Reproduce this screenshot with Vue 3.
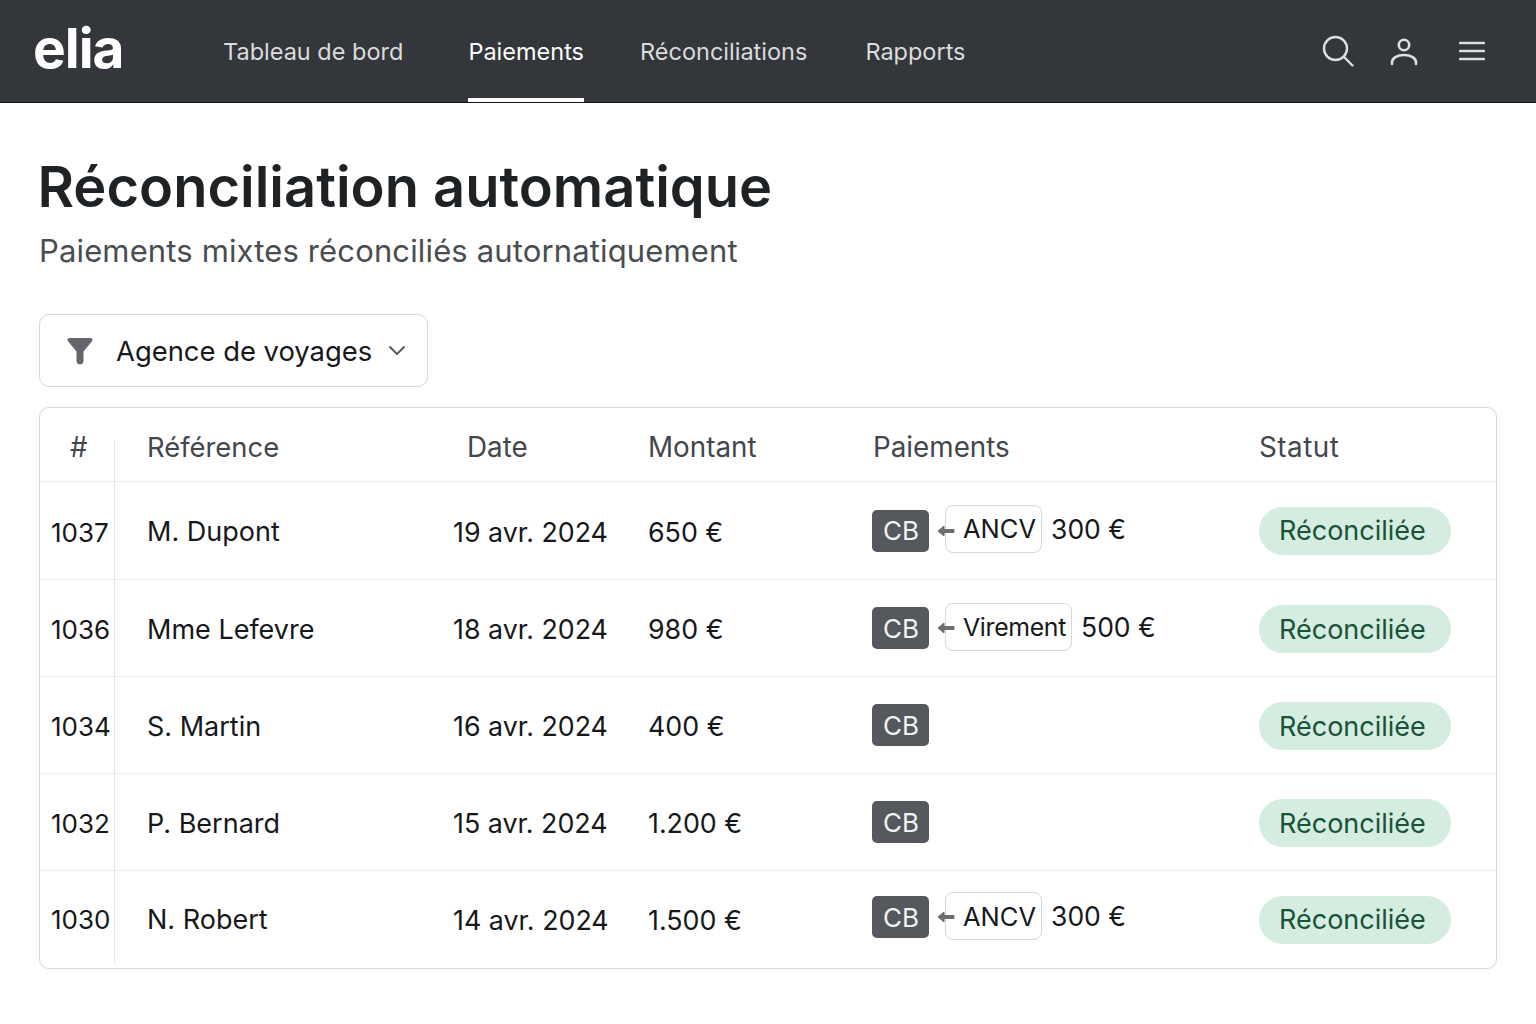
<script setup>
const rows = [
  { id: '1037', name: 'M. Dupont', date: '19 avr. 2024', amount: '650 €', other: 'ANCV', otherAmount: '300 €' },
  { id: '1036', name: 'Mme Lefevre', date: '18 avr. 2024', amount: '980 €', other: 'Virement', otherAmount: '500 €' },
  { id: '1034', name: 'S. Martin', date: '16 avr. 2024', amount: '400 €' },
  { id: '1032', name: 'P. Bernard', date: '15 avr. 2024', amount: '1.200 €' },
  { id: '1030', name: 'N. Robert', date: '14 avr. 2024', amount: '1.500 €', other: 'ANCV', otherAmount: '300 €' }
]
</script>

<template>
  <div class="page">
    <header class="topbar">
      <div class="logo">elia</div>
      <nav class="nav">
        <a class="nav-item nav-board">Tableau de bord</a>
        <a class="nav-item nav-pay active">Paiements</a>
        <a class="nav-item nav-rec">Réconciliations</a>
        <a class="nav-item">Rapports</a>
      </nav>
      <div class="top-icons">
        <svg width="32" height="32" viewBox="0 0 32 32" fill="none" stroke="#dcdedf" stroke-width="2.4" stroke-linecap="round">
          <circle cx="13.5" cy="13.5" r="11.5" />
          <path d="M22 22l8.500 8.500" />
        </svg>
        <svg width="30" height="30" viewBox="0 0 30 30" fill="none" stroke="#dcdedf" stroke-width="2.6" stroke-linecap="round">
          <circle cx="15" cy="9" r="5.200" />
          <path d="M3 28v-1.500C3 22 8 19 15 19s12 3 12 7.500V28" />
        </svg>
        <svg class="menu" width="26" height="20" viewBox="0 0 26 20" fill="none" stroke="#dcdedf" stroke-width="2.4" stroke-linecap="round">
          <path d="M1 2h24M1 10h24M1 18h24" />
        </svg>
      </div>
    </header>

    <main class="content">
      <h1>Réconciliation automatique</h1>
      <p class="subtitle">Paiements mixtes réconciliés autornatiquement</p>

      <button class="filter">
        <svg class="funnel" width="28" height="30" viewBox="0 0 28 30">
          <path d="M3.500 2h21c1.800 0 2.600 1.800 1.500 3.200L17.500 15.500V25c0 1.800-1.500 3.500-3.500 3.500s-3.500-1.700-3.500-3.500V15.500L2 5.200C.9 3.800 1.700 2 3.500 2z" fill="#63666a" />
        </svg>
        <span>Agence de voyages</span>
        <svg class="chev" width="18" height="11" viewBox="0 0 18 11" fill="none" stroke="#55585c" stroke-width="1.800" stroke-linecap="round" stroke-linejoin="round">
          <path d="M2 2l7 7 7-7" />
        </svg>
      </button>

      <section class="table">
        <div class="row head">
          <div class="c-id">#</div>
          <div class="c-ref">Référence</div>
          <div class="c-date">Date</div>
          <div>Montant</div>
          <div>Paiements</div>
          <div class="c-status">Statut</div>
        </div>
        <div v-for="r in rows" :key="r.id" class="row">
          <div class="c-id">{{ r.id }}</div>
          <div class="c-ref cell">{{ r.name }}</div>
          <div class="cell">{{ r.date }}</div>
          <div class="cell">{{ r.amount }}</div>
          <div class="pay">
            <span class="cb">CB</span>
            <template v-if="r.other">
              <svg class="arrow" width="18" height="12" viewBox="0 0 18 12">
                <path d="M1 6l6-5v3.500h10v3H7V11z" fill="#6b6e72" stroke="#6b6e72" stroke-linejoin="round" />
              </svg>
              <span class="other" :class="{ tight: r.other === 'Virement' }">{{ r.other }}</span>
              <span class="other-amount">{{ r.otherAmount }}</span>
            </template>
          </div>
          <div class="status-cell"><span class="status">Réconciliée</span></div>
        </div>
      </section>
    </main>
  </div>
</template>

<style>
html,
body {
  margin: 0;
  background: #fff;
}
</style>

<style scoped>
.page {
  font-family: Inter, "Liberation Sans", sans-serif;
  color: #1d2024;
  width: 1536px;
  height: 1024px;
  overflow: hidden;
}

.topbar {
  height: 102px;
  background: #33363a;
  border-bottom: 1px solid #111;
  display: flex;
  align-items: stretch;
  padding: 0 51px 0 33px;
}

.logo {
  width: 190px;
  font-size: 55px;
  font-weight: 700;
  letter-spacing: -1px;
  color: #fff;
  line-height: 96px;
}

.nav {
  display: flex;
  flex: 1;
}

.nav-item {
  font-size: 23.5px;
  color: #dadcdd;
  line-height: 104px;
  box-sizing: border-box;
  height: 102px;
  margin-right: 58px;
}

.nav-board {
  margin-right: 65px;
}

.nav-pay {
  margin-right: 56px;
}

.active {
  color: #fff;
  border-bottom: 4px solid #fff;
}

.top-icons {
  display: flex;
  align-items: center;
  gap: 35px;
}

.menu {
  margin-left: 5px;
}

.content {
  padding: 0 39px;
}

h1 {
  margin: 50px 0 0 -1.5px;
  font-size: 56px;
  line-height: 68px;
  font-weight: 600;
  color: #1f2225;
}

.subtitle {
  margin: 11px 0 0;
  font-size: 31px;
  line-height: 38px;
  letter-spacing: 0.14px;
  color: #4a4d50;
}

.filter {
  margin-top: 44px;
  width: 389px;
  height: 73px;
  box-sizing: border-box;
  background: #fff;
  border: 1px solid #d6d7d9;
  border-radius: 10px;
  display: flex;
  align-items: center;
  padding: 0 0 0 26px;
  font-family: inherit;
  font-size: 27.4px;
  color: #16181b;
}

.filter span {
  margin-left: 22px;
}

.chev {
  margin-left: 16px;
}

.table {
  margin-top: 20px;
  width: 1458px;
  box-sizing: border-box;
  border: 1px solid #d6d7d9;
  border-radius: 10px;
}

.row {
  display: grid;
  grid-template-columns: 75px 338px 195px 225px 386px 1fr;
  align-items: center;
  height: 97px;
  font-size: 26.8px;
  border-top: 1px solid #ececed;
  box-sizing: border-box;
  color: #16181b;
}

.row:nth-child(2),
.row:last-child {
  height: 98px;
}

.row.head {
  height: 73px;
  border-top: 0;
  color: #43474b;
  font-size: 27.8px;
}

.head > div {
  padding-top: 5px;
}

.head .c-status {
  letter-spacing: 0.5px;
}

.cell {
  padding-top: 2px;
}

.row:last-child .cell {
  padding-top: 0;
}

.c-id {
  align-self: stretch;
  display: flex;
  align-items: center;
  padding: 3px 0 0 11px;
  font-size: 26px;
  border-right: 1px solid #e4e5e6;
}

.head .c-id {
  align-self: end;
  align-items: flex-start;
  height: 41px;
  line-height: 14px;
  padding: 0 0 0 30px;
  box-sizing: border-box;
  font-size: 27.8px;
}

.row:last-child .c-id {
  margin-bottom: 5px;
  padding-top: 5px;
}

.c-ref {
  padding-left: 32px;
  font-size: 27px;
}

.head .c-ref {
  font-size: 27.4px;
}

.c-date {
  padding-left: 14px;
}

.pay {
  display: flex;
  align-items: center;
  margin-left: -1px;
  font-size: 26.5px;
}

.row:last-child .pay {
  padding-bottom: 5px;
}

.cb {
  width: 57px;
  height: 42px;
  padding-left: 1px;
  box-sizing: border-box;
  background: #55585d;
  color: #f2f3f3;
  border-radius: 5px;
  font-size: 26px;
  display: flex;
  align-items: center;
  justify-content: center;
}

.arrow {
  margin: 0 -10px 0 8px;
  position: relative;
  z-index: 1;
}

.other {
  height: 48px;
  box-sizing: border-box;
  padding: 0 5px 0 17px;
  border: 1px solid #d6d7d9;
  border-radius: 8px;
  display: flex;
  align-items: center;
  font-size: 25.5px;
  margin-top: -2px;
}

.other.tight {
  font-size: 24.8px;
  letter-spacing: -0.3px;
}

.other-amount {
  margin-left: 9px;
  margin-top: -2px;
}

.row:nth-child(2) .other,
.row:nth-child(2) .other-amount {
  margin-top: -4px;
}

.status-cell {
  padding-top: 2px;
}

.row:nth-child(2) .status-cell,
.row:last-child .status-cell {
  padding-top: 0;
}

.status {
  display: inline-flex;
  align-items: center;
  height: 48px;
  width: 192px;
  padding-left: 20px;
  box-sizing: border-box;
  border-radius: 24px;
  background: #d4ede0;
  color: #1a5236;
  font-size: 27px;
}
</style>
